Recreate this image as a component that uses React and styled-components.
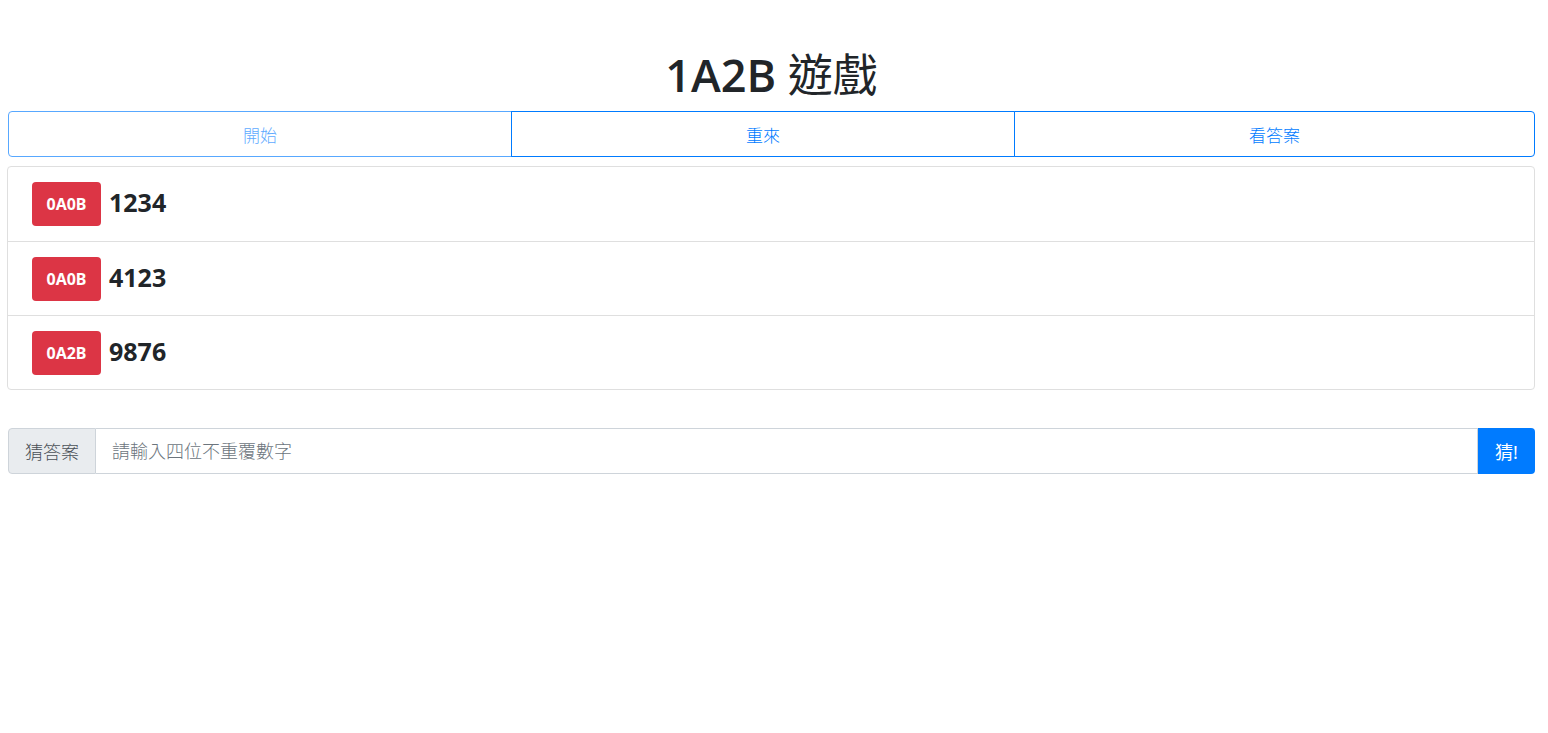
import React from 'react';
import styled, { createGlobalStyle } from 'styled-components';

const GlobalStyle = createGlobalStyle`
    body {
        margin: 0;
        background: #fff;
        font-family: "Noto Sans", "Noto Sans CJK TC", sans-serif;
        color: #212529;
    }
`;

const Page = styled.div`
    padding: 46px 13px 0 8px;
`;

const Title = styled.h1`
    margin: 0 0 8px;
    text-align: center;
    font-family: "Open Sans", "Noto Sans CJK TC", sans-serif;
    font-size: 45px;
    font-weight: 600;
    line-height: 57px;
    color: #212529;
`;

const TitleCjk = styled.span`
    font-weight: 400;
`;

const ButtonGroup = styled.div`
    display: flex;
`;

const GroupButton = styled.button`
    flex: ${p => (p.$grow ? 1 : '0 0 504px')};
    height: 46px;
    background: #fff;
    border: 1px solid #007bff;
    color: #007bff;
    font-family: inherit;
    font-size: 17px;
    font-weight: 300;
    cursor: pointer;
    opacity: ${p => (p.disabled ? 0.65 : 1)};
    margin-left: -1px;

    &:first-child {
        margin-left: 0;
        border-radius: 4px 0 0 4px;
    }

    &:last-child {
        border-radius: 0 4px 4px 0;
    }
`;

const List = styled.ul`
    list-style: none;
    margin: 9px 0 0 -1px;
    padding: 0;
    border: 1px solid #dfdfdf;
    border-radius: 4px;
`;

const Item = styled.li`
    display: flex;
    align-items: center;
    gap: 8px;
    height: 73px;
    padding: 0 24px;

    &:first-child {
        height: 74px;
    }

    & + & {
        border-top: 1px solid #dfdfdf;
    }
`;

const Badge = styled.span`
    display: inline-flex;
    align-items: center;
    justify-content: center;
    width: 69px;
    height: 44px;
    border-radius: 4px;
    background: #dc3545;
    color: #fff;
    font-size: 16px;
    font-weight: 700;
`;

const Guess = styled.span`
    margin-bottom: 4px;
    font-size: 25px;
    font-weight: 700;
    color: #212529;
`;

const InputGroup = styled.div`
    display: flex;
    margin-top: 38px;
    height: 46px;
`;

const Prepend = styled.span`
    display: flex;
    align-items: center;
    padding: 0 16px;
    background: #e9ecef;
    border: 1px solid #ced4da;
    border-radius: 4px 0 0 4px;
    color: #495057;
    font-size: 18px;
    font-weight: 300;
`;

const Input = styled.input`
    flex: 1;
    min-width: 0;
    border: 1px solid #ced4da;
    border-left: none;
    padding: 0 16px;
    font-family: inherit;
    font-size: 18px;
    font-weight: 300;
    color: #495057;
    outline: none;

    &::placeholder {
        color: #6c757d;
    }
`;

const Submit = styled.button`
    width: 57px;
    border: none;
    background: #007bff;
    color: #fff;
    font-family: inherit;
    font-size: 18px;
    border-radius: 0 4px 4px 0;
    cursor: pointer;
`;

const history = [
    { result: '0A0B', guess: '1234' },
    { result: '0A0B', guess: '4123' },
    { result: '0A2B', guess: '9876' },
];

const App = () => {
    return (
        <Page>
            <GlobalStyle />
            <Title>1A2B <TitleCjk>遊戲</TitleCjk></Title>
            <ButtonGroup>
                <GroupButton disabled>開始</GroupButton>
                <GroupButton>重來</GroupButton>
                <GroupButton $grow>看答案</GroupButton>
            </ButtonGroup>
            <List>
                {history.map((h, i) => (
                    <Item key={i}>
                        <Badge>{h.result}</Badge>
                        <Guess>{h.guess}</Guess>
                    </Item>
                ))}
            </List>
            <InputGroup>
                <Prepend>猜答案</Prepend>
                <Input placeholder="請輸入四位不重覆數字" />
                <Submit>猜!</Submit>
            </InputGroup>
        </Page>
    );
};

export default App;
